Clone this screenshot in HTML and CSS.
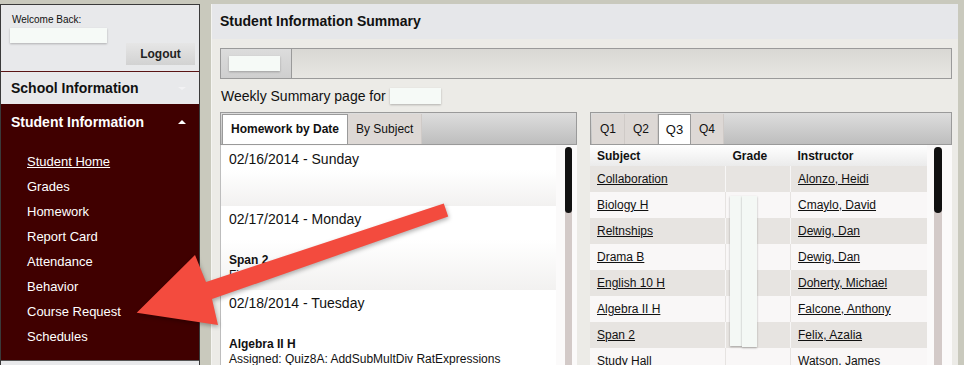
FILE: index.html
```html
<!DOCTYPE html>
<html lang="en">
<head>
    <meta charset="UTF-8">
    <meta name="viewport" content="width=device-width, initial-scale=1.0">
    <title>Student Information Summary</title>
    <link rel="stylesheet" href="styles.css">
</head>
<body>
    <div class="page">
        <aside class="sidebar">
            <div class="account">
                <div class="welcome">Welcome Back:</div>
                <div class="mask name-mask"></div>
                <button class="logout">Logout</button>
            </div>
            <div class="section-title closed">School Information <span class="caret down"></span></div>
            <div class="section-title open">Student Information <span class="caret up"></span></div>
            <ul class="menu">
                <li><a class="current" href="#">Student Home</a></li>
                <li><a href="#">Grades</a></li>
                <li><a href="#">Homework</a></li>
                <li><a href="#">Report Card</a></li>
                <li><a href="#">Attendance</a></li>
                <li><a href="#">Behavior</a></li>
                <li><a href="#">Course Request</a></li>
                <li><a href="#">Schedules</a></li>
            </ul>
            <div class="sidebar-foot"></div>
        </aside>

        <main class="main">
            <h1 class="main-title">Student Information Summary</h1>
            <div class="main-body">
                <div class="student-tabs">
                    <div class="student-tab"><span class="mask tab-mask"></span></div>
                </div>
                <p class="weekly">Weekly Summary page for <span class="mask week-mask"></span></p>

                <div class="panels">
                    <section class="panel homework">
                        <div class="tabbar">
                            <span class="tab active">Homework by Date</span>
                            <span class="tab">By Subject</span>
                        </div>
                        <div class="scroll-area">
                            <div class="days">
                                <div class="day">
                                    <div class="date">02/16/2014 - Sunday</div>
                                </div>
                                <div class="day">
                                    <div class="date">02/17/2014 - Monday</div>
                                    <div class="assignment">
                                        <b>Span 2</b>
                                        <span>Finish</span>
                                    </div>
                                </div>
                                <div class="day">
                                    <div class="date">02/18/2014 - Tuesday</div>
                                    <div class="assignment">
                                        <b>Algebra II H</b>
                                        <span>Assigned: Quiz8A: AddSubMultDiv RatExpressions</span>
                                    </div>
                                </div>
                            </div>
                            <div class="scrollbar"><div class="thumb"></div></div>
                        </div>
                    </section>

                    <section class="panel grades">
                        <div class="tabbar">
                            <span class="tab q">Q1</span>
                            <span class="tab q">Q2</span>
                            <span class="tab q active">Q3</span>
                            <span class="tab q">Q4</span>
                        </div>
                        <div class="scroll-area">
                            <table class="grade-table">
                                <thead>
                                    <tr><th>Subject</th><th>Grade</th><th>Instructor</th></tr>
                                </thead>
                                <tbody>
                                    <tr><td><a href="#">Collaboration</a></td><td></td><td><a href="#">Alonzo, Heidi</a></td></tr>
                                    <tr><td><a href="#">Biology H</a></td><td></td><td><a href="#">Cmaylo, David</a></td></tr>
                                    <tr><td><a href="#">Reltnships</a></td><td></td><td><a href="#">Dewig, Dan</a></td></tr>
                                    <tr><td><a href="#">Drama B</a></td><td></td><td><a href="#">Dewig, Dan</a></td></tr>
                                    <tr><td><a href="#">English 10 H</a></td><td></td><td><a href="#">Doherty, Michael</a></td></tr>
                                    <tr><td><a href="#">Algebra II H</a></td><td></td><td><a href="#">Falcone, Anthony</a></td></tr>
                                    <tr><td><a href="#">Span 2</a></td><td></td><td><a href="#">Felix, Azalia</a></td></tr>
                                    <tr><td>Study Hall</td><td></td><td>Watson, James</td></tr>
                                </tbody>
                            </table>
                            <div class="scrollbar"><div class="thumb"></div></div>
                        </div>
                        <div class="strip strip-a"></div>
                        <div class="strip strip-b"></div>
                    </section>
                </div>
            </div>
        </main>
    </div>

    <svg class="arrow" width="964" height="365" viewBox="0 0 964 365">
        <polygon fill="#f34b3e" points="443.8,203.4 448.2,216.6 212,299 218,325 136.7,312.7 195,255 206,282"/>
    </svg>
</body>
</html>
```

FILE: styles.css
```css
body {
    margin: 0;
    background-color: #c9c9bd;
    font-family: "Liberation Sans", Arial, sans-serif;
    color: #111;
    overflow: hidden;
}
.page {
    display: flex;
    padding-top: 4px;
    height: 361px;
}
.mask {
    display: inline-block;
    background-color: #f6faf7;
    box-shadow: 0 1px 2px rgba(0, 0, 0, 0.25);
}

/* sidebar */
.sidebar {
    width: 200px;
    box-sizing: border-box;
    border: 1px solid #3a3a3a;
    border-bottom: none;
    margin-right: 11px;
    display: flex;
    flex-direction: column;
    flex-shrink: 0;
}
.account {
    background-color: #e8e9eb;
    padding: 9px 4px 6px 9px;
    display: flex;
    flex-direction: column;
    align-items: flex-start;
    border-bottom: 1px solid #5a1414;
}
.welcome {
    font-size: 10px;
    line-height: 12px;
    padding-left: 2px;
}
.name-mask {
    width: 97px;
    height: 15px;
    margin-top: 2px;
}
.logout {
    align-self: flex-end;
    width: 69px;
    height: 22px;
    border: none;
    background: linear-gradient(#e6e6e6, #d2d2d2);
    font-family: inherit;
    font-size: 12px;
    font-weight: bold;
    color: #222;
    padding: 0;
}
.section-title {
    position: relative;
    font-size: 14px;
    font-weight: bold;
    padding-left: 10px;
}
.section-title.closed {
    height: 32px;
    line-height: 32px;
    background-color: #e8e9eb;
}
.section-title.open {
    height: 36px;
    line-height: 36px;
    background-color: #400000;
    color: #fff;
}
.caret {
    position: absolute;
    left: 177px;
    width: 0;
    height: 0;
    border-left: 4px solid transparent;
    border-right: 4px solid transparent;
}
.caret.down {
    top: 15px;
    border-top: 3px solid #f2f2f4;
}
.caret.up {
    top: 16px;
    border-bottom: 4px solid #fff;
}
.menu {
    list-style: none;
    margin: 0;
    padding: 9px 0 11px 26px;
    background-color: #400000;
}
.menu li {
    font-size: 13px;
    line-height: 25px;
}
.menu a {
    color: #fff;
    text-decoration: none;
}
.menu a.current {
    text-decoration: underline;
}
.sidebar-foot {
    flex: 1;
    background-color: #e8e9eb;
    border-top: 1px solid #555;
}

/* main */
.main {
    width: 747px;
    box-sizing: border-box;
    background-color: #ecebe7;
    border-left: 1px solid #f4f4f1;
    display: flex;
    flex-direction: column;
}
.main-title {
    margin: 0;
    height: 35px;
    line-height: 35px;
    padding-left: 8px;
    font-size: 14px;
    background-color: #e6e7ea;
}
.main-body {
    padding: 9px 6px 0 8px;
}
.student-tabs {
    height: 29px;
    border: 1px solid #9a9a9a;
    background: linear-gradient(#d9d8d4, #e7e6e2);
    display: flex;
}
.student-tab {
    width: 70px;
    border-right: 1px solid #9a9a9a;
    background: linear-gradient(#dcdcdc, #cfcfcf);
    display: flex;
    align-items: center;
    justify-content: center;
}
.tab-mask {
    width: 51px;
    height: 15px;
    margin-left: -4px;
}
.weekly {
    margin: 0;
    height: 33px;
    display: flex;
    align-items: center;
    font-size: 14px;
    padding-left: 1px;
}
.week-mask {
    width: 51px;
    height: 16px;
    margin-left: 4px;
}
.panels {
    display: flex;
    gap: 13px;
}
.panel {
    position: relative;
    display: flex;
    flex-direction: column;
}
.homework {
    width: 357px;
}
.grades {
    width: 362px;
}
.tabbar {
    height: 30px;
    border: 1px solid #9a9a9a;
    background: linear-gradient(#dddddd, #bebebe);
    display: flex;
    padding: 1px 0 0 1px;
}
.tab {
    font-size: 12px;
    line-height: 30px;
    padding: 0 8px;
    background-color: #ddd8d5;
    border-right: 1px solid #cfcac7;
}
.tab.active {
    background-color: #fff;
    border: 1px solid #9a9a9a;
    border-bottom: none;
    line-height: 29px;
    font-weight: bold;
}
.tab.q {
    width: 33px;
    box-sizing: border-box;
    padding: 0;
    text-align: center;
    font-size: 12px;
}
.tab.q.active {
    font-weight: normal;
    font-size: 13px;
}
.scroll-area {
    display: flex;
    height: 220px;
    background-color: #fbfafa;
}
.scrollbar {
    width: 8px;
    margin: 2px 6px 0 7px;
    background-color: #d3cac8;
    border-radius: 4px 4px 0 0;
}
.homework .scrollbar {
    margin-left: 9px;
    width: 7px;
    margin-right: 5px;
}
.thumb {
    height: 66px;
    background-color: #111;
    border-radius: 4px;
}

/* homework list */
.days {
    width: 335px;
    padding-top: 1px;
    border-left: 1px solid #bdbdbd;
}
.day {
    box-sizing: border-box;
    min-height: 60px;
    padding: 5px 8px 7px;
    background: linear-gradient(#ffffff, #ffffff 40%, #f2f1f0);
}
.day:nth-child(3) {
    background: #fff;
}
.date {
    font-size: 14px;
    line-height: 16px;
}
.assignment {
    margin-top: 26px;
    font-size: 12px;
    line-height: 15px;
    display: flex;
    flex-direction: column;
}

/* grade table */
.grade-table {
    width: 337px;
    border-collapse: collapse;
    font-size: 12px;
    align-self: flex-start;
}
.grade-table th {
    height: 21px;
    text-align: left;
    padding: 0 7px;
    background: linear-gradient(#ffffff, #ebebeb);
}
.grade-table td {
    height: 26px;
    padding: 0 7px;
    border-left: 1px solid #f7f6f6;
    background-color: #e7e4e1;
}
.grade-table td:first-child {
    border-left: none;
}
.grade-table tbody tr:nth-child(even) td {
    background-color: #f9f7f7;
    border-left-color: #e6e3e1;
}
.grade-table th:nth-child(1), .grade-table td:nth-child(1) {
    width: 121px;
}
.grade-table th:nth-child(2), .grade-table td:nth-child(2) {
    width: 50px;
}
.grade-table a {
    color: #111;
}

/* redaction strips over the grade column */
.strip {
    position: absolute;
    background-color: #f4f8f5;
    box-shadow: 0 1px 2px rgba(0, 0, 0, 0.3);
}
.strip-a {
    left: 140px;
    top: 84px;
    width: 12px;
    height: 150px;
}
.strip-b {
    left: 152px;
    top: 84px;
    width: 15px;
    height: 151px;
}

.arrow {
    position: absolute;
    top: 0;
    left: 0;
    pointer-events: none;
    filter: drop-shadow(1px 2px 2px rgba(0, 0, 0, 0.3));
}
```
